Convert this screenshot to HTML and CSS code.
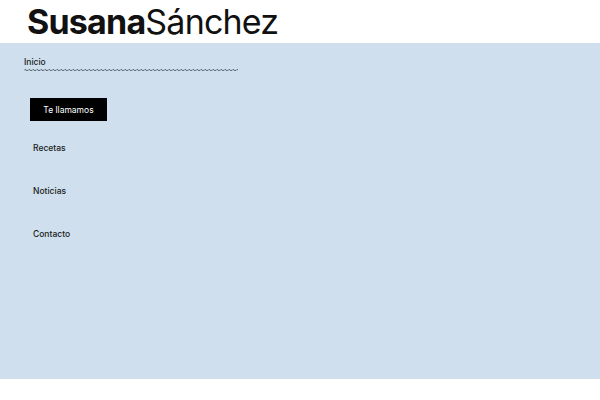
FILE: index.html
```html
<!DOCTYPE html>
<html lang="es">
  <head>
    <meta charset="UTF-8" />
    <meta name="viewport" content="width=device-width, initial-scale=1.0" />
    <title>Susana Sánchez</title>
    <link rel="stylesheet" href="styles.css">
  </head>
  <body>
    <header class="header">
      <div class="brand"><b>Susana</b>Sánchez</div>
    </header>
    <nav class="menu">
      <a class="current" href="#">
        <span>Inicio</span>
        <svg class="wave" width="214" height="4" viewBox="0 0 214 4">
          <defs>
            <pattern id="w" width="4" height="4" patternUnits="userSpaceOnUse">
              <path d="M0 2.5 Q1 0.5 2 2 T4 2" fill="none" stroke="#4a5360" stroke-width="0.9" />
            </pattern>
          </defs>
          <rect width="214" height="4" fill="url(#w)" />
        </svg>
      </a>
      <a class="call" href="#">Te llamamos</a>
      <a class="item" href="#">Recetas</a>
      <a class="item" href="#">Noticias</a>
      <a class="item" href="#">Contacto</a>
    </nav>
  </body>
</html>
```

FILE: styles.css
```css
body {
  margin: 0;
  background: #fff;
  font-family: Inter, "DejaVu Sans", sans-serif;
  color: #1a1d22;
}

a {
  color: inherit;
  text-decoration: none;
}

.header {
  height: 43px;
  padding-left: 27px;
  box-sizing: border-box;
  overflow: hidden;
}

.brand {
  font-size: 34px;
  line-height: 44px;
  letter-spacing: -0.8px;
  color: #111;
}

.brand b {
  font-weight: 700;
}

.menu {
  background: #cfdfed;
  height: 336px;
  display: flex;
  flex-direction: column;
  align-items: flex-start;
  padding: 13px 0 0 24px;
  box-sizing: border-box;
  font-size: 8.5px;
  font-weight: 500;
}

.current {
  display: flex;
  flex-direction: column;
}

.current span {
  line-height: 12px;
}

.wave {
  display: block;
}

.call {
  margin: 26px 0 0 6px;
  background: #000;
  color: #fff;
  width: 77px;
  height: 23px;
  display: flex;
  align-items: center;
  justify-content: center;
  font-weight: 400;
}

.item {
  margin: 21px 0 10px 9px;
  line-height: 12px;
}
```
